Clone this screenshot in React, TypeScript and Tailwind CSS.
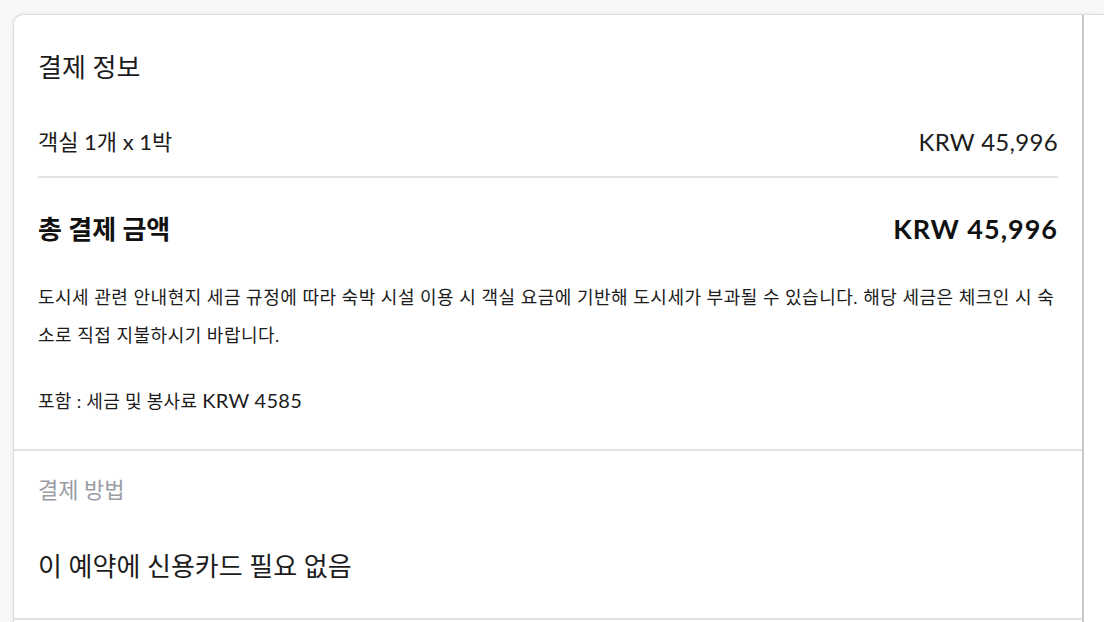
const font = { fontFamily: 'Lato, "Noto Sans CJK KR", sans-serif' };

function SummaryRow({ label, amount }: { label: string; amount: string }) {
  return (
    <div className="flex items-center justify-between leading-[28px] text-[#1c1c1c]">
      <span className="text-[22px]">{label}</span>
      <span className="text-[24px] tracking-[0.3px]">{amount}</span>
    </div>
  );
}

export default function App() {
  return (
    <div className="h-[622px] w-[1104px] overflow-hidden bg-[#f8f8f8] pl-[13px] pt-[14px]" style={font}>
      <div className="flex h-[700px] rounded-tl-[10px] border-l border-t border-[#dcdce1] bg-white shadow-[0_0_4px_rgba(0,0,0,0.08)]">
        <div className="w-[1070px] shrink-0 border-r-2 border-[#c4c7cc]">
          {/* payment info */}
          <section className="border-b-2 border-[#e2e2e6] px-6 pb-[29px] pt-[36px]">
            <h2 className="text-[26px] leading-[32px] text-[#1c1c1c]">결제 정보</h2>
            <div className="mt-[45px]">
              <SummaryRow label="객실 1개 x 1박" amount="KRW 45,996" />
            </div>
            <div className="mt-[20px] h-[2px] bg-[#e2e2e6]" />
            <div className="mt-[35px] flex items-center justify-between font-bold leading-[32px] text-[#111111]">
              <span className="text-[26px]">총 결제 금액</span>
              <span className="text-[27px] tracking-[1px]">KRW 45,996</span>
            </div>
            <p className="mt-[33px] break-all text-[18px] leading-[38px] tracking-[0.5px] text-[#1c1c1c]">
              도시세 관련 안내현지 세금 규정에 따라 숙박 시설 이용 시 객실 요금에 기반해 도시세가 부과될 수 있습니다. 해당 세금은 체크인 시 숙소로 직접 지불하시기 바랍니다.
            </p>
            <p className="mt-[27px] text-[18px] leading-[38px] tracking-[0.3px] text-[#1c1c1c]">
              포함 : 세금 및 봉사료 <span className="text-[20px] tracking-[0.3px]">KRW 4585</span>
            </p>
          </section>

          {/* payment method */}
          <section className="border-b-2 border-[#e2e2e6] px-6 pb-[36px] pt-[25px]">
            <h3 className="text-[22px] leading-[28px] text-[#9a9ca3]">결제 방법</h3>
            <p className="mt-[46px] text-[26px] leading-[32px] text-[#1c1c1c]">이 예약에 신용카드 필요 없음</p>
          </section>
        </div>
        <div className="flex-1" />
      </div>
    </div>
  );
}
